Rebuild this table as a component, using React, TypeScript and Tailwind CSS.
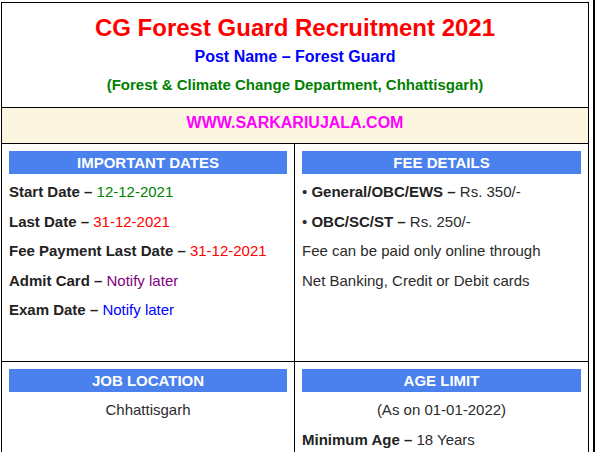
import React from 'react';

interface Row {
  label: string;
  value: string;
  color: string;
  bullet?: boolean;
}

const dates: Row[] = [
  { label: 'Start Date', value: '12-12-2021', color: 'text-[#008000]' },
  { label: 'Last Date', value: '31-12-2021', color: 'text-[#ff0000]' },
  { label: 'Fee Payment Last Date', value: '31-12-2021', color: 'text-[#ff0000]' },
  { label: 'Admit Card', value: 'Notify later', color: 'text-[#800080]' },
  { label: 'Exam Date', value: 'Notify later', color: 'text-[#0000ff]' }
];

const fees: Row[] = [
  { label: 'General/OBC/EWS', value: 'Rs. 350/-', color: 'text-[#2b2b2b]', bullet: true },
  { label: 'OBC/SC/ST', value: 'Rs. 250/-', color: 'text-[#2b2b2b]', bullet: true }
];

function Heading({ children }: { children: React.ReactNode }) {
  return (
    <div className="h-[23px] bg-[#4a81ec] text-center text-[15px] font-bold uppercase leading-[23px] text-white">
      {children}
    </div>
  );
}

function Item({ row }: { row: Row }) {
  return (
    <p className="leading-[29.5px] whitespace-nowrap">
      {row.bullet && <span>• </span>}
      <span className="font-bold text-[#222]">{row.label} – </span>
      <span className={row.color}>{row.value}</span>
    </p>
  );
}

export default function App() {
  return (
    <div className="flex h-[452px] w-[600px] overflow-hidden bg-white font-['Liberation_Sans',Arial,sans-serif] text-[15px] text-[#2b2b2b]">
      <div className="ml-[1px] mt-[2px] w-[588px] shrink-0 self-start border border-black">
        {/* title block */}
        <div className="flex h-[105px] flex-col items-center border-b border-black pt-[9px] font-bold">
          <h1 className="text-[24px] leading-[32px] text-[#ff0000]">CG Forest Guard Recruitment 2021</h1>
          <p className="text-[16px] leading-[26px] text-[#0000ff]">Post Name – Forest Guard</p>
          <p className="mt-[2px] text-[15px] leading-[26px] text-[#008000]">
            (Forest &amp; Climate Change Department, Chhattisgarh)
          </p>
        </div>

        <div className="h-[36px] border-b border-black bg-[#fcf6e1] pt-[3px] text-center text-[16px] font-bold leading-[24px] text-[#ff00ff]">
          WWW.SARKARIUJALA.COM
        </div>

        <div className="flex h-[218px] border-b border-black">
          <div className="w-[293px] shrink-0 border-r border-black px-[7px] pt-[7px]">
            <Heading>Important Dates</Heading>
            <div className="mt-[3px]">
              {dates.map((d) => (
                <Item key={d.label} row={d} />
              ))}
            </div>
          </div>
          <div className="flex-1 px-[7px] pt-[7px]">
            <Heading>Fee Details</Heading>
            <div className="mt-[3px]">
              {fees.map((f) => (
                <Item key={f.label} row={f} />
              ))}
              <p className="leading-[29.5px]">Fee can be paid only online through</p>
              <p className="leading-[29.5px]">Net Banking, Credit or Debit cards</p>
            </div>
          </div>
        </div>

        <div className="flex h-[120px]">
          <div className="w-[293px] shrink-0 border-r border-black px-[7px] pt-[7px]">
            <Heading>Job Location</Heading>
            <p className="mt-[3px] text-center leading-[29.5px]">Chhattisgarh</p>
          </div>
          <div className="flex-1 px-[7px] pt-[7px]">
            <Heading>Age Limit</Heading>
            <div className="mt-[3px]">
              <p className="text-center leading-[29.5px]">(As on 01-01-2022)</p>
              <p className="leading-[29.5px]">
                <span className="font-bold text-[#222]">Minimum Age – </span>
                18 Years
              </p>
            </div>
          </div>
        </div>
      </div>

      <div className="ml-[4px] w-[2px] shrink-0 self-stretch bg-black" />
    </div>
  );
}
